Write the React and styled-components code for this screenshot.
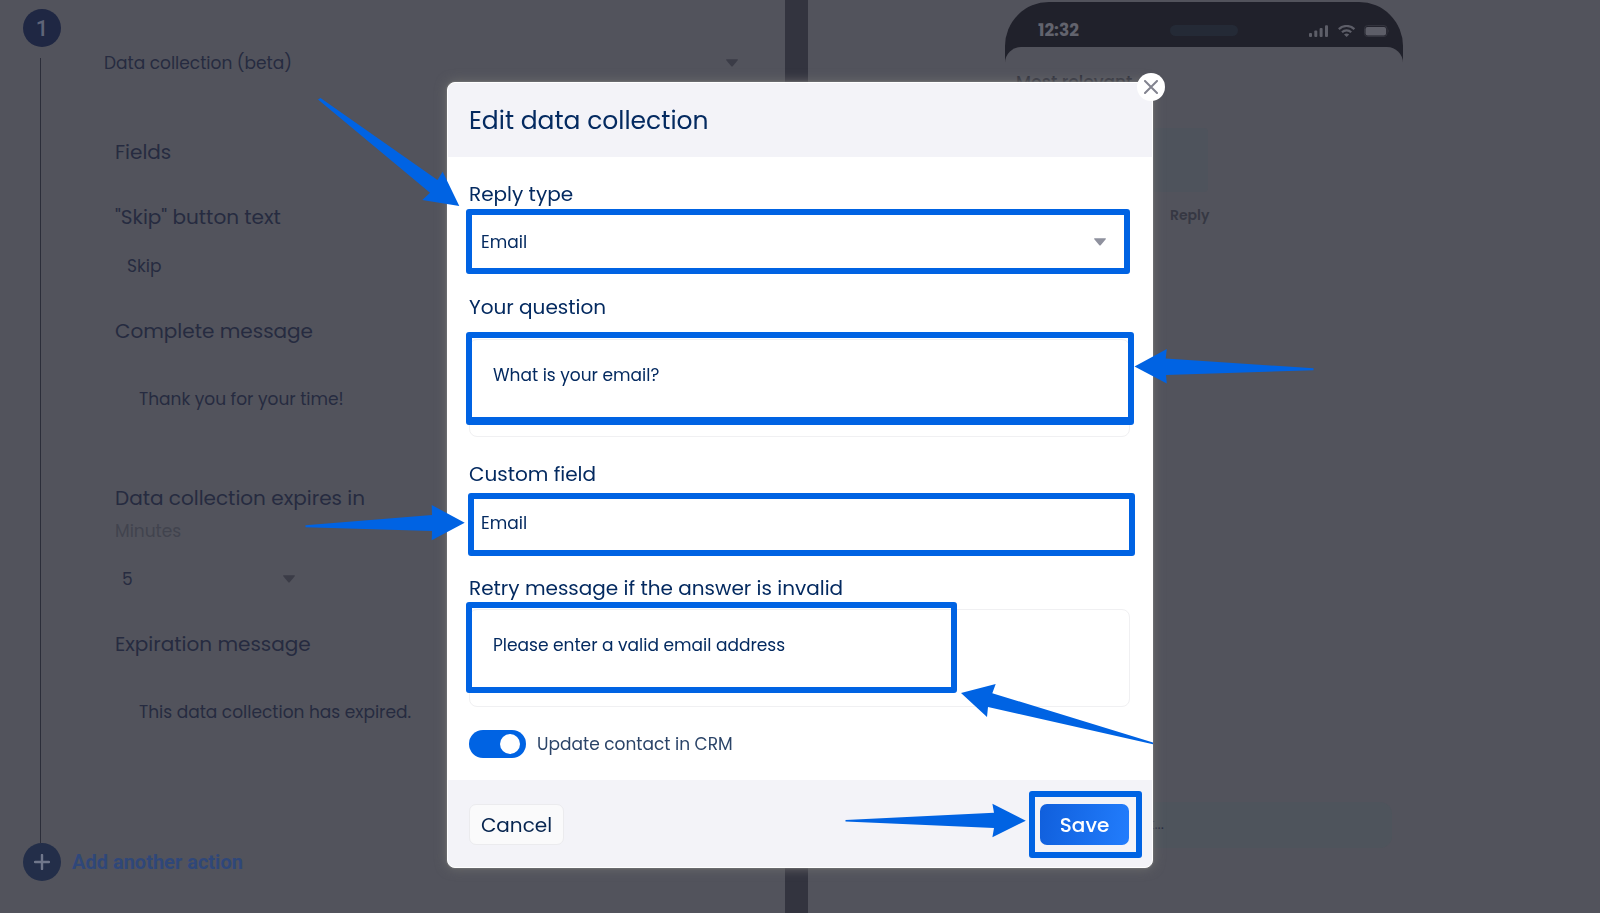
import React from "react";
import styled, { createGlobalStyle } from "styled-components";

const color = {
  page: "#52535c",
  divider: "#33343f",
  dimText: "#262b40",
  mutedText: "#41434e",
  navy: "#042a60",
  blue: "#0063e3",
  panel: "#f3f3f8",
};

const GlobalStyle = createGlobalStyle`
  *, *::before, *::after { box-sizing: border-box; }
  body {
    margin: 0;
    background: ${color.page};
    font-family: Poppins, Inter, "Open Sans", sans-serif;
  }
  button, input, select, textarea { font: inherit; color: inherit; }
`;

/* ---------- builder page ---------- */

const Page = styled.div`
  display: grid;
  grid-template-columns: 785fr 23px 792fr;
  min-height: 100vh;
  color: ${color.dimText};
`;

const Builder = styled.section`
  display: flex;
  flex-direction: column;
  padding: 9px 23px 32px;
`;

const Step = styled.div`
  display: flex;
  flex: 1;
`;

const Rail = styled.div`
  display: flex;
  flex-direction: column;
  align-items: center;
  width: 38px;
`;

const Badge = styled.span`
  display: grid;
  place-items: center;
  width: 38px;
  height: 38px;
  border-radius: 50%;
  background: ${(p) => (p.$tone === "add" ? "#232e49" : "#1f2743")};
  color: ${(p) => (p.$tone === "add" ? "#70778b" : "#5f6478")};
  font-family: Roboto, sans-serif;
  font-size: 22px;
  font-weight: 500;
`;

const RailLine = styled.span`
  flex: 1;
  width: 1px;
  margin: 11px 3px 0 0;
  background: #2b2d39;
`;

const StepContent = styled.div`
  flex: 1;
  padding: 27px 0 0 31px;
`;

const StepFields = styled.div`
  padding: 47px 0 0 23px;
`;

const AddAction = styled.button`
  display: flex;
  align-items: center;
  align-self: flex-start;
  gap: 11px;
  padding: 0;
  border: 0;
  background: none;
  color: #2f4779;
  font-family: Roboto, sans-serif;
  font-size: 20px;
  font-weight: 700;
`;

const Divider = styled.div`
  background: ${color.divider};
`;

/* ---------- form parts ---------- */

const Field = styled.div`
  margin-bottom: ${(p) => p.$after ?? 24}px;
`;

const Label = styled.label`
  display: block;
  font-size: 20px;
  line-height: 30px;
`;

const GroupTitle = styled.h2`
  margin: 0 0 35px;
  font-size: 20px;
  font-weight: 400;
  line-height: 30px;
`;

const Hint = styled.div`
  margin-top: 6px;
  color: ${color.mutedText};
  font-size: 17px;
  line-height: 24px;
`;

const Control = styled.div`
  position: relative;
  width: ${(p) => (p.$width ? `${p.$width}px` : "auto")};
  margin-top: ${(p) => p.$gap ?? 8}px;
`;

const TextInput = styled.input`
  display: block;
  width: 100%;
  height: 52px;
  padding: 0 12px;
  border: 0;
  background: transparent;
  font-size: 17px;
  outline: 0;
`;

const SelectInput = styled.select`
  display: block;
  width: 100%;
  height: ${(p) => p.$height ?? 52}px;
  padding: 0 ${(p) => p.$pad ?? 12}px;
  border: 0;
  background: transparent;
  font-size: 17px;
  appearance: none;
  outline: 0;
`;

const TextArea = styled.textarea`
  display: block;
  width: 100%;
  height: ${(p) => (p.$framed ? 98 : 96)}px;
  padding: 23px;
  border: 1px solid ${(p) => (p.$framed ? "#f0f0f2" : "transparent")};
  border-radius: 8px;
  background: transparent;
  font-size: 17px;
  line-height: 24px;
  resize: none;
  overflow: hidden;
  outline: 0;
`;

const CaretIcon = styled.svg`
  position: absolute;
  top: 50%;
  right: 24px;
  width: 12px;
  height: 8px;
  margin-top: -4px;
  pointer-events: none;
`;

function Caret({ fill }) {
  return (
    <CaretIcon viewBox="0 0 12 8" aria-hidden="true">
      <path d="M0.6 0.3h10.8q.9.2.3.9L6.7 7.2q-.7.7-1.4 0L.3 1.2Q-.3.5.6.3Z" fill={fill} />
    </CaretIcon>
  );
}

/* ---------- phone preview ---------- */

const Preview = styled.section`
  display: flex;
  justify-content: center;
  align-items: flex-start;
  padding-top: 2px;
`;

const Phone = styled.div`
  width: 398px;
`;

const StatusBar = styled.div`
  display: grid;
  grid-template-columns: 1fr 68px 1fr;
  align-items: center;
  height: 60px;
  padding: 0 13px 3px 33px;
  border-radius: 44px 44px 0 0;
  background: #20212b;
  color: #62636d;
`;

const Clock = styled.span`
  padding-bottom: 1px;
  font-size: 17px;
  font-weight: 700;
  line-height: 24px;
`;

const Speaker = styled.span`
  height: 11px;
  margin-left: -10px;
  margin-right: 10px;
  border-radius: 6px;
  background: #242a36;
`;

const StatusIcons = styled.svg`
  justify-self: end;
  width: 81px;
  height: 12px;
`;

const Screen = styled.div`
  display: flex;
  flex-direction: column;
  margin-top: -15px;
  padding: 22px 11px 0;
  border-radius: 16px 16px 0 0;
  background: ${color.page};
`;

const SortRow = styled.div`
  color: #2c2e3a;
  font-size: 17px;
  font-weight: 500;
  line-height: 26px;
`;

const Bubble = styled.div`
  width: 192px;
  height: 64px;
  margin-top: 33px;
  border-radius: 4px;
  background: #4e535c;
`;

const Actions = styled.div`
  padding: 11px 0 0 154px;
  color: #363843;
  font-size: 14px;
  font-weight: 600;
  line-height: 24px;
`;

const Composer = styled.input`
  width: 100%;
  height: 46px;
  margin-top: 575px;
  padding: 0 0 4px 133px;
  border: 0;
  border-radius: 12px;
  background: #4e545c;
  font-size: 15px;
  outline: 0;
`;

/* ---------- dialog ---------- */

const Overlay = styled.div`
  position: fixed;
  inset: 0;
  display: flex;
  align-items: flex-start;
  justify-content: center;
  padding-top: 82px;
  overflow: auto;
`;

const Dialog = styled.div`
  position: relative;
  width: 706px;
  margin-bottom: 40px;
  border: 1px solid #fff;
  border-radius: 8px;
  background: #fff;
  color: ${color.navy};
  box-shadow: 0 0 2px #8b8b8d, 0 0 12px #70716f;
`;

const DialogHeader = styled.header`
  padding: 18px 21px 17px;
  border-radius: 7px 7px 0 0;
  background: ${color.panel};
`;

const DialogTitle = styled.h1`
  margin: 0;
  font-size: 25px;
  font-weight: 400;
  line-height: 39px;
`;

const DialogBody = styled.div`
  padding: 22px 22px 22px 21px;
`;

const DialogFooter = styled.footer`
  display: flex;
  align-items: center;
  justify-content: space-between;
  height: 87px;
  padding: 2px 23px 0 21px;
  border-radius: 0 0 7px 7px;
  background: ${color.panel};
`;

const CloseButton = styled.button`
  position: absolute;
  top: -10px;
  right: -13px;
  display: grid;
  place-items: center;
  width: 28px;
  height: 28px;
  padding: 0;
  border: 0;
  border-radius: 50%;
  background: #fff;
`;

const ToggleRow = styled.label`
  display: flex;
  align-items: center;
  gap: 11px;
  color: #2b4468;
  font-size: 17px;
  line-height: 28px;
`;

const Toggle = styled.input`
  appearance: none;
  display: flex;
  align-items: center;
  width: 57px;
  height: 28px;
  margin: 0;
  padding: 0 6px;
  border-radius: 14px;
  background: #b9bcc6;

  &::before {
    content: "";
    width: 20px;
    height: 20px;
    border-radius: 50%;
    background: #fff;
  }
  &:checked {
    justify-content: flex-end;
    background: ${color.blue};
  }
`;

const Button = styled.button`
  display: block;
  height: 41px;
  padding: 0;
  width: ${(p) => (p.$primary ? 89 : 95)}px;
  border: 1px solid ${(p) => (p.$primary ? "transparent" : "#ebebee")};
  border-radius: 7px;
  background: ${(p) =>
    p.$primary ? "linear-gradient(100deg, #105fdc, #227dfd) border-box" : "#fafafb"};
  color: ${(p) => (p.$primary ? "#fff" : "#06244f")};
  font-size: 20px;
  font-weight: ${(p) => (p.$primary ? 500 : 400)};
`;

const SaveSlot = styled.div`
  position: relative;
`;

/* ---------- tutorial marks ---------- */

const Highlight = styled.span`
  position: absolute;
  inset: ${(p) => p.$inset};
  border: 6px solid ${color.blue};
  border-bottom-width: ${(p) => p.$base ?? 6}px;
  border-radius: 3px;
  pointer-events: none;
`;

const ArrowLayer = styled.svg`
  position: absolute;
  top: -1px;
  left: -1px;
  width: 706px;
  height: 786px;
  overflow: visible;
  fill: ${color.blue};
  pointer-events: none;
`;

const arrows = [
  "318,99.5 320.5,98 437.5,180 442.7,171.7 459.3,206 422.3,200 430,192.7",
  "1313.5,368.3 1313.5,370.3 1166,375 1166.8,383.6 1134.5,366.5 1166.8,349 1165.7,358.5",
  "305.5,525.3 305.5,527.2 432,531 431.7,540.3 464.7,522.7 431.7,505 432,515",
  "1153,742.5 1153,744.2 988,707 987,717 961,693 995.7,684 992.3,693.2",
  "845.5,820 845.5,821.6 994,828 992.4,837.2 1025.8,820.7 992.4,803.8 994,812.8",
];

export default function App() {
  return (
    <>
      <GlobalStyle />
      <Page>
        <Builder>
          <Step>
            <Rail>
              <Badge>1</Badge>
              <RailLine />
            </Rail>
            <StepContent>
              <Control $gap={0}>
                <SelectInput $height={54} aria-label="Action type">
                  <option>Data collection (beta)</option>
                </SelectInput>
                <Caret fill="#3b3c47" />
              </Control>
              <StepFields>
                <GroupTitle>Fields</GroupTitle>
                <Field>
                  <Label htmlFor="skip">"Skip" button text</Label>
                  <Control>
                    <TextInput id="skip" defaultValue="Skip" />
                  </Control>
                </Field>
                <Field>
                  <Label htmlFor="complete">Complete message</Label>
                  <Control $gap={17}>
                    <TextArea id="complete" defaultValue="Thank you for your time!" />
                  </Control>
                </Field>
                <Field>
                  <Label htmlFor="expires">Data collection expires in</Label>
                  <Hint>Minutes</Hint>
                  <Control $width={204} $gap={10}>
                    <SelectInput id="expires" $pad={7}>
                      <option>5</option>
                    </SelectInput>
                    <Caret fill="#3b3c47" />
                  </Control>
                </Field>
                <Field>
                  <Label htmlFor="expired">Expiration message</Label>
                  <Control $gap={17}>
                    <TextArea id="expired" defaultValue="This data collection has expired." />
                  </Control>
                </Field>
              </StepFields>
            </StepContent>
          </Step>
          <AddAction type="button">
            <Badge $tone="add">
              <svg width="16" height="16" viewBox="0 0 16 16" aria-hidden="true">
                <path d="M8 1v14M1 8h14" stroke="currentColor" strokeWidth="2.4" strokeLinecap="round" />
              </svg>
            </Badge>
            Add another action
          </AddAction>
        </Builder>

        <Divider />

        <Preview>
          <Phone>
            <StatusBar>
              <Clock>12:32</Clock>
              <Speaker />
              <StatusIcons viewBox="0 0 81 12" aria-hidden="true">
                <g fill="#5d5e68">
                  <rect x="0" y="8" width="3" height="4" rx="1" />
                  <rect x="5.3" y="5.5" width="3" height="6.5" rx="1" />
                  <rect x="10.6" y="3" width="3" height="9" rx="1" />
                  <rect x="16" y="0.3" width="3" height="11.7" rx="1" />
                  <rect x="56.5" y="2" width="20.5" height="8.5" rx="2" />
                  <path d="M37.6 12l-2.6-2.6q2.6-2 5.2 0Z" />
                </g>
                <path
                  d="M29.8 4.1a11.3 11.3 0 0 1 15.6 0M33 7.2a6.6 6.6 0 0 1 9.2 0"
                  fill="none"
                  stroke="#5d5e68"
                  strokeWidth="2.2"
                />
                <rect x="55.5" y="0.6" width="22.5" height="10.9" rx="3" fill="none" stroke="#34353f" />
                <path d="M79.3 4q1.6 2 0 4Z" fill="#34353f" />
              </StatusIcons>
            </StatusBar>
            <Screen>
              <SortRow>Most relevant</SortRow>
              <Bubble />
              <Actions>Reply</Actions>
              <Composer aria-label="Comment" defaultValue="t..." />
            </Screen>
          </Phone>
        </Preview>
      </Page>

      <Overlay>
        <Dialog role="dialog" aria-labelledby="dialog-title">
          <DialogHeader>
            <DialogTitle id="dialog-title">Edit data collection</DialogTitle>
          </DialogHeader>
          <DialogBody>
            <Field $after={25}>
              <Label htmlFor="reply-type">Reply type</Label>
              <Control>
                <SelectInput id="reply-type" $height={50}>
                  <option>Email</option>
                </SelectInput>
                <Caret fill="#8f919e" />
                <Highlight $inset="-8px 0 -7px -3px" />
              </Control>
            </Field>
            <Field $after={22}>
              <Label htmlFor="question">Your question</Label>
              <Control $gap={17}>
                <TextArea id="question" $framed defaultValue="What is your email?" />
                <Highlight $inset="-7px -4px 12px -3px" $base={8} />
              </Control>
            </Field>
            <Field>
              <Label htmlFor="custom-field">Custom field</Label>
              <Control>
                <TextInput id="custom-field" defaultValue="Email" />
                <Highlight $inset="-4px -5px -7px -1px" />
              </Control>
            </Field>
            <Field $after={23}>
              <Label htmlFor="retry">Retry message if the answer is invalid</Label>
              <Control $gap={6}>
                <TextArea id="retry" $framed defaultValue="Please enter a valid email address" />
                <Highlight $inset="-7px 173px 14px -3px" />
              </Control>
            </Field>
            <ToggleRow>
              <Toggle type="checkbox" role="switch" defaultChecked />
              Update contact in CRM
            </ToggleRow>
          </DialogBody>
          <DialogFooter>
            <Button type="button">Cancel</Button>
            <SaveSlot>
              <Button type="button" $primary>
                Save
              </Button>
              <Highlight $inset="-13px -13px -13px -11px" />
            </SaveSlot>
          </DialogFooter>
          <CloseButton type="button" aria-label="Close">
            <svg width="14" height="14" viewBox="0 0 14 14" aria-hidden="true">
              <path d="M1 1l12 12M13 1L1 13" stroke="#82838f" strokeWidth="2" strokeLinecap="round" />
            </svg>
          </CloseButton>
          <ArrowLayer viewBox="447 82 706 786" aria-hidden="true">
            {arrows.map((points) => (
              <polygon key={points} points={points} />
            ))}
          </ArrowLayer>
        </Dialog>
      </Overlay>
    </>
  );
}
